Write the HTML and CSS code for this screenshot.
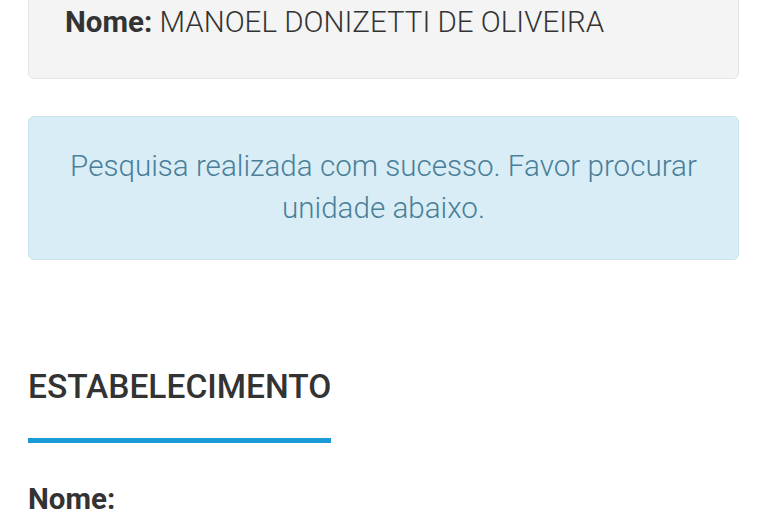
FILE: index.html
```html
<!DOCTYPE html>
<html lang="pt-BR">
<head>
  <meta charset="UTF-8">
  <title>Consulta</title>
  <meta name="viewport" content="width=device-width, initial-scale=1.0">
  <link rel="stylesheet" href="styles.css">
</head>
<body>

<div class="page">
  <div class="well">
    <p><strong>Nome:</strong> MANOEL DONIZETTI DE OLIVEIRA</p>
  </div>

  <div class="alert">
    Pesquisa realizada com sucesso. Favor procurar unidade abaixo.
  </div>

  <h2 class="section-title">ESTABELECIMENTO</h2>

  <p class="field"><strong>Nome:</strong></p>
</div>

</body>
</html>
```

FILE: styles.css
```css
body {
  font-family: Roboto, "Liberation Sans", sans-serif;
  background-color: #fff;
  margin: 0;
  color: #333;
}
.page {
  padding: 0 26px 0 28px;
}
.well {
  margin-top: -40px;
  background: #f4f4f4;
  border: 1px solid #e5e5e5;
  border-radius: 6px;
  padding: 40px 36px 30px;
  height: 47px;
}
.well p {
  margin: 0;
  font-size: 29.5px;
  font-weight: 300;
  line-height: 42px;
}
.well strong, .field strong {
  font-weight: 700;
}
.alert {
  margin-top: 37px;
  background: #d9edf7;
  border: 1px solid #c6e4f0;
  border-radius: 6px;
  padding: 28px 30px 30px;
  color: #4b7f98;
  font-size: 29.6px;
  font-weight: 300;
  line-height: 42px;
  text-align: center;
}
.section-title {
  margin: 106px 0 0;
  font-size: 33.5px;
  font-weight: 500;
  color: #333;
  line-height: 42px;
  display: inline-block;
  padding-bottom: 30px;
  border-bottom: 5px solid #1a9ad6;
}
.field {
  margin: 39px 0 0;
  font-size: 29.5px;
  line-height: 34px;
}
```
